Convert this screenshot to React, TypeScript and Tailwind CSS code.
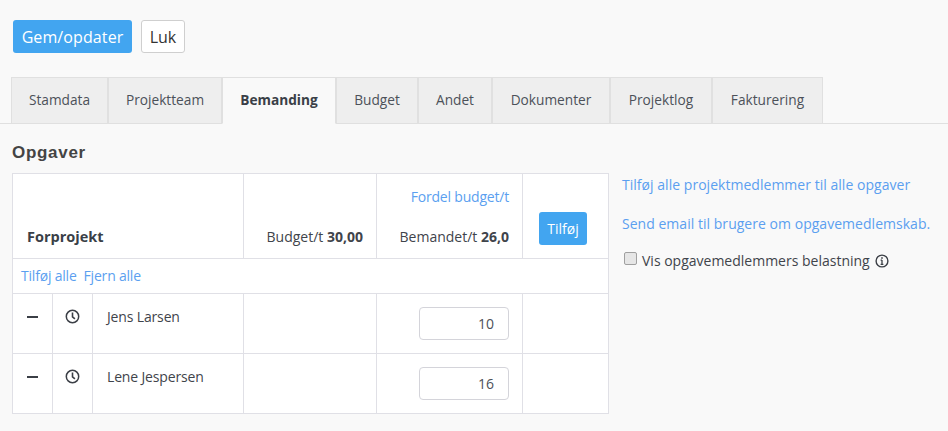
const tabs = [
  { label: 'Stamdata', width: 'w-[97px]' },
  { label: 'Projektteam', width: 'w-[114px]' },
  { label: 'Bemanding', width: 'w-[114px]', active: true },
  { label: 'Budget', width: 'w-[82px]' },
  { label: 'Andet', width: 'w-[74px]' },
  { label: 'Dokumenter', width: 'w-[118px]' },
  { label: 'Projektlog', width: 'w-[102px]' },
  { label: 'Fakturering', width: 'w-[111px]' },
]

const members = [
  { name: 'Jens Larsen', hours: '10' },
  { name: 'Lene Jespersen', hours: '16' },
]

function ClockIcon() {
  return (
    <svg width="15" height="15" viewBox="0 0 15 15" fill="none" stroke="#3b3f46" className="mx-auto">
      <circle cx="7.5" cy="7.5" r="6.2" strokeWidth="1.5" />
      <path d="M7.5 3.6V7.8L9.9 9.9" strokeWidth="1.6" />
    </svg>
  )
}

function InfoIcon() {
  return (
    <svg width="14" height="14" viewBox="0 0 14 14" fill="none" stroke="#3b3f46" className="inline-block">
      <circle cx="7" cy="7" r="5.9" strokeWidth="1.4" />
      <path d="M7 6V10.4M5.6 6.2H7M5.6 10.4H8.4" strokeWidth="1.3" />
      <path d="M7 3.2V4.7" strokeWidth="1.6" />
    </svg>
  )
}

export default function App() {
  return (
    <div className="h-[431px] w-[948px] overflow-hidden bg-[#f9f9f9] font-['Open_Sans',sans-serif] text-[14px] text-[#3f444b]">
      <div className="flex gap-[9px] pl-[13px] pt-[20px]">
        <button className="h-[33px] w-[119px] rounded-[3px] bg-[#42a5f0] text-[16px] tracking-[0.1px] text-white">Gem/opdater</button>
        <button className="h-[33px] w-[44px] rounded-[3px] border border-[#cfcfcf] bg-white text-[16px] text-[#333]">Luk</button>
      </div>

      <div className="mt-[24px] flex border-b border-[#e0e0e0] pl-[11px]">
        {tabs.map((tab) => (
          <div
            key={tab.label}
            className={`-mb-px flex h-[47px] items-center justify-center border border-[#e0e0e0] text-[13.7px] ${tab.width} ${
              tab.active ? 'border-b-[#f9f9f9] bg-[#f9f9f9] font-bold text-[#3a3f47]' : 'bg-[#eeeeee] text-[#4c5159]'
            }`}
          >
            {tab.label}
          </div>
        ))}
      </div>

      <h2 className="mb-[9px] ml-[12px] mt-[18px] font-['Liberation_Sans',sans-serif] text-[17px] leading-[22px] font-bold tracking-[0.7px] text-[#444]">
        Opgaver
      </h2>

      <div className="flex items-start">
        <table className="ml-[12px] w-[596px] table-fixed border-collapse bg-white [&_td]:border [&_td]:border-[#e0e0e6]">
          <colgroup>
            <col className="w-[40px]" />
            <col className="w-[40px]" />
            <col className="w-[151px]" />
            <col className="w-[133px]" />
            <col className="w-[146px]" />
            <col className="w-[86px]" />
          </colgroup>
          <tbody>
            <tr className="h-[85px]">
              <td colSpan={3} className="pb-[10px] pl-[14px] align-bottom text-[14.5px] font-bold text-[#3a3f47]">Forprojekt</td>
              <td className="pb-[11px] pr-[13px] text-right align-bottom">
                Budget/t <b>30,00</b>
              </td>
              <td className="pb-[11px] pr-[13px] text-right align-bottom">
                <div className="mb-[19px] tracking-[-0.2px] text-[#5b9ff0]">Fordel budget/t</div>
                Bemandet/t <b>26,0</b>
              </td>
              <td className="pb-[13px] pr-[5px] text-center align-bottom">
                <button className="h-[33px] w-[48px] rounded-[3px] bg-[#42a5f0] text-[14px] text-white">Tilføj</button>
              </td>
            </tr>
            <tr className="h-[35px]">
              <td colSpan={6} className="pb-[2px] pl-[8px] tracking-[-0.2px] text-[#5b9ff0]">
                Tilføj alle<span className="ml-[7px]">Fjern alle</span>
              </td>
            </tr>
            {members.map((member) => (
              <tr key={member.name} className="h-[60px]">
                <td className="pb-[14px] text-center">
                  <div className="mx-auto h-[2px] w-[11px] bg-[#3b3f46]" />
                </td>
                <td className="pb-[14px]">
                  <ClockIcon />
                </td>
                <td className="pb-[15px] pl-[14px] tracking-[-0.15px]">{member.name}</td>
                <td />
                <td className="pr-[13px]">
                  <input
                    readOnly
                    value={member.hours}
                    className="ml-auto block h-[33px] w-[90px] rounded-[4px] border border-[#d4d4da] bg-white pr-[14px] text-right text-[14px] text-[#4c5159]"
                  />
                </td>
                <td />
              </tr>
            ))}
          </tbody>
        </table>

        <div className="ml-[13px] mt-[1px] text-[#5b9ff0]">
          <p className="tracking-[0.03px]">Tilføj alle projektmedlemmer til alle opgaver</p>
          <p className="mt-[18px] tracking-[0.03px]">Send email til brugere om opgavemedlemskab.</p>
          <label className="mt-[16px] flex items-center text-[#3f444b]">
            <span className="ml-[2px] mr-[5px] mt-[-4px] h-[13px] w-[13px] rounded-[2px] border border-[#a0a0a0] bg-[#e6e6e6]" />
            <span>Vis opgavemedlemmers belastning</span>
            <span className="ml-[5px] flex"><InfoIcon /></span>
          </label>
        </div>
      </div>
    </div>
  )
}
